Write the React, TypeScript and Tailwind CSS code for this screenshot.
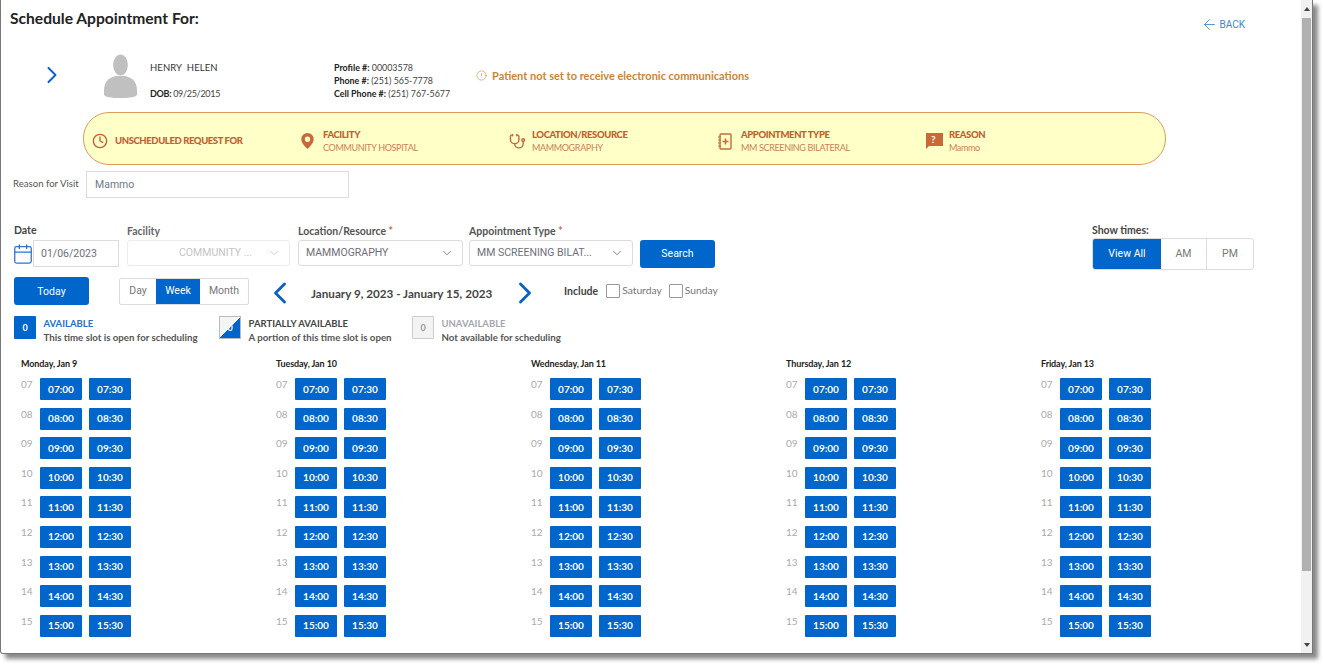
import React from "react";
import { ArrowLeft, Calendar, ChevronDown, ChevronLeft, ChevronRight, CircleAlert, Clock, Stethoscope } from "lucide-react";

const days = ["Monday, Jan 9", "Tuesday, Jan 10", "Wednesday, Jan 11", "Thursday, Jan 12", "Friday, Jan 13"];
const hours = ["07", "08", "09", "10", "11", "12", "13", "14", "15"];

function Person() {
  return (
    <svg width="33" height="44" viewBox="0 0 36 46" preserveAspectRatio="none" className="block">
      <ellipse cx="18" cy="11.5" rx="8" ry="11" fill="#c0c0c0" />
      <path d="M0 38 C0 27 8 24 13 23 L23 23 C28 24 36 27 36 38 L36 42 C36 45 28 46 18 46 C8 46 0 45 0 42 Z" fill="#c0c0c0" />
    </svg>
  );
}

function Pin() {
  return (
    <svg width="13" height="16" viewBox="0 0 14 18" className="block ml-[1px]">
      <path fillRule="evenodd" d="M7 0a7 7 0 0 1 7 7c0 4-4 8-7 11C4 15 0 11 0 7a7 7 0 0 1 7-7Zm0 4a3 3 0 1 0 0 6 3 3 0 0 0 0-6Z" fill="#c8693a" />
    </svg>
  );
}

function Book() {
  return (
    <svg width="14" height="17" viewBox="0 0 14 17" className="block" fill="none" stroke="#c8693a">
      <rect x="2" y="1" width="11" height="15" rx="1" strokeWidth="1.4" />
      <path d="M7.5 5.5v6M4.5 8.5h6" strokeWidth="1.6" />
      <path d="M0 4h3M0 7h3M0 10h3M0 13h3" strokeWidth="1" />
    </svg>
  );
}

function Question() {
  return (
    <div className="relative">
      <svg width="17" height="16" viewBox="0 0 17 16" className="block">
        <path d="M0 0h17v13H3l-3 3Z" fill="#c8693a" />
      </svg>
      <span className="absolute left-[5px] top-[-1px] text-[10px] leading-[14px] font-bold text-white">?</span>
    </div>
  );
}

function Info({ icon, title, value, cls }: { icon: React.ReactNode; title: string; value: string; cls: string }) {
  return (
    <div className={`flex items-center ${cls}`}>
      <div className="w-[23px] flex justify-start shrink-0">{icon}</div>
      <div className="flex flex-col">
        <span className="text-[9.5px] leading-[13px] font-black tracking-[-0.4px] text-[#c0602f] whitespace-nowrap">{title}</span>
        <span className="text-[9px] leading-[14px] tracking-[-0.35px] text-[#c9805a] whitespace-nowrap">{value}</span>
      </div>
    </div>
  );
}

function Select({ value, w, disabled }: { value: string; w: string; disabled?: boolean }) {
  return (
    <div className={`${w} h-[26px] flex items-center justify-between border rounded-[3px] pl-[7px] pr-2 ${disabled ? "border-[#ececec]" : "border-[#dcdcdc]"}`}>
      <span className={`font-['Roboto',sans-serif] text-[10.5px] whitespace-nowrap ${disabled ? "pl-[44px] text-[#c4c4c4]" : "text-[#6e6e78]"}`}>{value}</span>
      <ChevronDown size={14} strokeWidth={1.4} color={disabled ? "#c4c4c4" : "#666"} />
    </div>
  );
}

function Legend({ box, title, titleCls, text, w }: { box: React.ReactNode; title: string; titleCls: string; text: string; w: string }) {
  return (
    <div className={`flex items-start ${w}`}>
      {box}
      <div className="ml-[7.5px] flex flex-col pt-[1px]">
        <span className={`text-[9.5px] leading-[13px] font-bold ${titleCls}`}>{title}</span>
        <span className="text-[9.7px] leading-[14px] font-bold text-[#555] whitespace-nowrap">{text}</span>
      </div>
    </div>
  );
}

export default function App() {
  return (
    <div className="w-[1323px] h-[664px] overflow-hidden bg-white font-['Lato',sans-serif]">
      <div className="w-[1313px] h-[654px] flex border-l border-b border-r border-[#777] rounded-bl-[3px] bg-white shadow-[5px_5px_4px_#8a8a8a]">
        <div className="flex-1 min-w-0 relative">
          <div className="flex justify-between items-start pl-[9px] pt-[9px] h-[50px]">
            <h1 className="text-[15.6px] leading-[18px] font-bold text-[#222]">Schedule Appointment For:</h1>
            <div className="flex items-center gap-[2px] mt-[7px] mr-[56px] text-[#3d85cc] font-['Roboto',sans-serif] text-[10px]">
              <ArrowLeft size={17} strokeWidth={1.2} />
              <span>BACK</span>
            </div>
          </div>

          <div className="flex h-[50px] items-start">
            <div className="ml-[37px] mt-[11px] text-[#0b62c4]"><ChevronRight size={28} strokeWidth={1.7} /></div>
            <div className="ml-[38px] mt-[4px]"><Person /></div>
            <div className="ml-[13px] w-[184px] flex flex-col text-[9px] text-[#444]">
              <span className="text-[9.5px] leading-[13px] mt-[11px] text-[#333] tracking-[0.1px]">HENRY&nbsp; HELEN</span>
              <span className="leading-[13px] mt-[13px] tracking-[-0.3px]"><b className="text-[#222]">DOB:</b> 09/25/2015</span>
            </div>
            <div className="w-[142px] flex flex-col text-[8.9px] leading-[13px] text-[#444] mt-[11px]">
              <span><b className="text-[#222]">Profile #:</b> 00003578</span>
              <span><b className="text-[#222]">Phone #:</b> (251) 565-7778</span>
              <span><b className="text-[#222]">Cell Phone #:</b> (251) 767-5677</span>
            </div>
            <div className="flex items-center gap-[5px] mt-[19px] text-[#c8853a] text-[11px] font-bold leading-[13px]">
              <CircleAlert size={11} strokeWidth={1.3} />
              <span>Patient not set to receive electronic communications</span>
            </div>
          </div>

          <div className="ml-[82px] mt-[12px] w-[1083px] h-[53px] pt-[5px] rounded-[26px] border border-[#dc9c5c] bg-[#ffffc8] flex items-center">
            <div className="ml-[8px] w-[208px] flex items-center shrink-0">
              <div className="w-[23px] text-[#c0602f]"><Clock size={16} strokeWidth={2} /></div>
              <span className="text-[9.5px] font-black tracking-[-0.4px] text-[#c0602f] whitespace-nowrap">UNSCHEDULED REQUEST FOR</span>
            </div>
            <Info cls="w-[209px]" icon={<Pin />} title="FACILITY" value="COMMUNITY HOSPITAL" />
            <Info cls="w-[209px]" icon={<div className="text-[#c8693a]"><Stethoscope size={17} strokeWidth={2} /></div>} title="LOCATION/RESOURCE" value="MAMMOGRAPHY" />
            <Info cls="w-[208px]" icon={<Book />} title="APPOINTMENT TYPE" value="MM SCREENING BILATERAL" />
            <Info cls="w-[150px]" icon={<Question />} title="REASON" value="Mammo" />
          </div>

          <div className="flex items-center mt-[6px] ml-[12px] h-[27px]">
            <span className="w-[73px] text-[9.6px] text-[#555]">Reason for Visit</span>
            <div className="w-[263px] h-[27px] border border-[#dcdcdc] flex items-center pl-[8px] pt-[1px] font-['Roboto',sans-serif] text-[10.5px] text-[#6e7a88]">Mammo</div>
          </div>

          <div className="flex ml-[13px] mt-[27px] h-[53px] items-start">
            <div className="w-[113px] flex flex-col">
              <span className="text-[10.5px] leading-[13px] mt-[-1px] font-bold text-[#444] mb-[3px]">Date</span>
              <div className="flex items-center">
                <Calendar size={22} strokeWidth={1.4} color="#2f74c4" className="shrink-0 ml-[-2px] mr-[-1px]" />
                <div className="w-[86px] h-[27px] border border-[#dcdcdc] flex items-center pl-[7px] font-['Roboto',sans-serif] text-[10.5px] text-[#6e6e78]">01/06/2023</div>
              </div>
            </div>
            <div className="w-[171px] flex flex-col">
              <span className="text-[10.5px] leading-[13px] font-bold text-[#666] mb-[2px]">Facility</span>
              <Select value="COMMUNITY ..." w="w-[163px]" disabled />
            </div>
            <div className="w-[171px] flex flex-col">
              <span className="text-[10.5px] leading-[13px] font-bold text-[#555] mb-[2px]">Location/Resource <span className="text-[#c8693a]">*</span></span>
              <Select value="MAMMOGRAPHY" w="w-[165px]" />
            </div>
            <div className="w-[171px] flex flex-col">
              <span className="text-[10.5px] leading-[13px] font-bold text-[#555] mb-[2px]">Appointment Type <span className="text-[#c8693a]">*</span></span>
              <Select value="MM SCREENING BILAT..." w="w-[164px]" />
            </div>
            <div className="w-[75px] h-[28px] mt-[15px] rounded-[3px] bg-[#0066cc] text-white flex items-center justify-center font-['Roboto',sans-serif] text-[10.5px]">Search</div>
            <div className="ml-[377px] flex flex-col">
              <span className="text-[10.5px] leading-[13px] font-bold text-[#444] mt-[-1px] mb-[1px]">Show times:</span>
              <div className="flex h-[32px] border border-[#dcdcdc] rounded-[3px] w-[162px] font-['Roboto',sans-serif] text-[10.5px]">
                <div className="w-[68px] bg-[#0066cc] text-white flex items-center justify-center rounded-l-[2px]">View All</div>
                <div className="w-[46px] border-r border-[#dcdcdc] text-[#777] flex items-center justify-center">AM</div>
                <div className="flex-1 text-[#777] flex items-center justify-center">PM</div>
              </div>
            </div>
          </div>

          <div className="flex ml-[13px] mt-[-1px] h-[28px] items-center">
            <div className="w-[75px] h-[28px] pt-[1px] rounded-[3px] bg-[#0066cc] text-white flex items-center justify-center font-['Roboto',sans-serif] text-[10.5px] shrink-0">Today</div>
            <div className="ml-[30px] w-[130px] h-[27px] flex border border-[#dcdcdc] rounded-[2px] font-['Roboto',sans-serif] text-[10.5px] shrink-0">
              <div className="w-[36px] text-[#777] flex items-center justify-center">Day</div>
              <div className="w-[44px] bg-[#0066cc] text-white flex items-center justify-center">Week</div>
              <div className="flex-1 text-[#777] flex items-center justify-center">Month</div>
            </div>
            <div className="ml-[13px] mt-[4px] text-[#0b62c4] shrink-0"><ChevronLeft size={36} strokeWidth={1.9} /></div>
            <span className="ml-[13px] mt-[5px] w-[196px] shrink-0 text-[11.7px] font-bold text-[#444] whitespace-nowrap">January 9, 2023 - January 15, 2023</span>
            <div className="mt-[4px] text-[#0b62c4] shrink-0"><ChevronRight size={36} strokeWidth={1.9} /></div>
            <span className="ml-[21px] mt-[1px] text-[10.5px] font-bold text-[#444]">Include</span>
            <div className="ml-[8px] w-[14px] h-[14px] border border-[#999] rounded-[1px]" />
            <span className="ml-[2px] text-[10.3px] text-[#777]">Saturday</span>
            <div className="ml-[7px] w-[14px] h-[14px] border border-[#999] rounded-[1px]" />
            <span className="ml-[2px] text-[10.3px] text-[#777]">Sunday</span>
          </div>

          <div className="flex ml-[13px] mt-[11px] h-[26px]">
            <Legend
              w="w-[205px]"
              box={<div className="w-[22px] h-[23px] shrink-0 bg-[#0066cc] text-white text-[9px] font-bold flex items-center justify-center rounded-[1px]">0</div>}
              title="AVAILABLE"
              titleCls="text-[#2470c6]"
              text="This time slot is open for scheduling"
            />
            <Legend
              w="w-[193px]"
              box={<div className="w-[22px] h-[23px] shrink-0 border border-[#bbb] bg-[linear-gradient(135deg,#f5f5f5_50%,#0066cc_50%)] text-white text-[9px] font-bold flex items-center justify-center">0</div>}
              title="PARTIALLY AVAILABLE"
              titleCls="text-[#444]"
              text="A portion of this time slot is open"
            />
            <Legend
              w="w-[200px]"
              box={<div className="w-[22px] h-[23px] shrink-0 border border-[#ccc] bg-[#f3f3f3] text-[#999] text-[9px] font-bold flex items-center justify-center rounded-[1px]">0</div>}
              title="UNAVAILABLE"
              titleCls="text-[#a5a5ae]"
              text="Not available for scheduling"
            />
          </div>

          <div className="grid grid-cols-[repeat(5,255px)] ml-[20px] mt-[15px]">
            {days.map((d) => (
              <div key={d} className="flex flex-col">
                <span className="text-[9px] leading-[13px] font-bold tracking-[-0.1px] text-[#222] h-[21px] whitespace-nowrap">{d}</span>
                <div className="flex flex-col gap-[7.6px]">
                  {hours.map((h) => (
                    <div key={h} className="flex items-start h-[22px]">
                      <span className="w-[19px] text-[10px] leading-[13px] text-[#aaa]">{h}</span>
                      <div className="flex gap-[7px]">
                        {["00", "30"].map((m) => (
                          <div key={m} className="w-[42px] h-[22px] rounded-[1px] bg-[#0066cc] text-white text-[10px] font-bold flex items-center justify-center">{h}:{m}</div>
                        ))}
                      </div>
                    </div>
                  ))}
                </div>
              </div>
            ))}
          </div>
        </div>

        <div className="w-[11px] shrink-0 bg-[#f1f1f1] flex flex-col">
          <div className="h-[18px] flex items-center justify-center shrink-0">
            <div className="w-0 h-0 border-l-[3px] border-r-[3px] border-b-[4px] border-l-transparent border-r-transparent border-b-[#444]" />
          </div>
          <div className="h-[553px] mx-[1px] bg-[#b0b0b0]" />
          <div className="flex-1 flex items-end justify-center pb-[6px]">
            <div className="w-0 h-0 border-l-[3px] border-r-[3px] border-t-[4px] border-l-transparent border-r-transparent border-t-[#444]" />
          </div>
        </div>
      </div>
    </div>
  );
}
